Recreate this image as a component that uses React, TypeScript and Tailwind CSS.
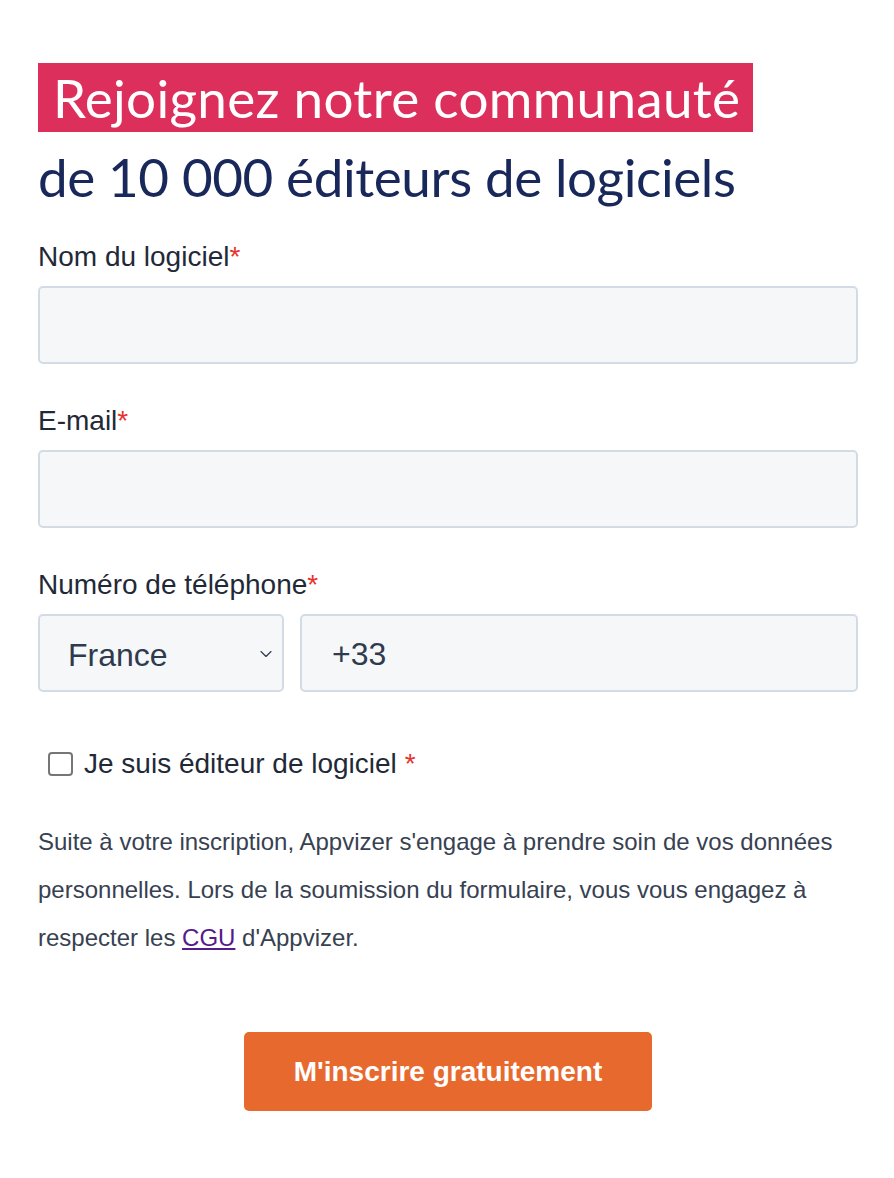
import { ChevronDown } from 'lucide-react'

const labelCls = "block text-[28px] leading-[32px] text-[#1f2937] mb-[13px]"
const inputCls = "w-full h-[78px] bg-[#f5f7f9] border-2 border-[#d3dbe5] rounded-[5px] px-[30px] pt-[3px] text-[32px] text-[#2f3b4d] outline-none"

function Star() {
  return <span className="text-[#e8322d]">*</span>
}

export default function App() {
  return (
    <div className="min-h-[1178px] bg-white pl-[38px] pr-[36px] pt-[63px] font-['Liberation_Sans',Arial,sans-serif]">
      {/* Heading */}
      <h1 className="font-['Lato','Source_Sans_Pro',sans-serif] text-[#18285a] text-[53px] leading-[69px]">
        <span className="inline-block bg-[#dc2f5c] text-white pl-[15px] pr-[13px] tracking-[0.3px]">Rejoignez notre communauté</span>
        <br />
        <span className="inline-block mt-[10px] tracking-[-0.4px]">de 10 000 éditeurs de logiciels</span>
      </h1>

      {/* Nom du logiciel */}
      <div className="mt-[30px]">
        <label className={labelCls}>Nom du logiciel<Star /></label>
        <input className={inputCls} />
      </div>

      {/* E-mail */}
      <div className="mt-[41px]">
        <label className={labelCls}>E-mail<Star /></label>
        <input className={inputCls} />
      </div>

      {/* Téléphone */}
      <div className="mt-[41px]">
        <label className={labelCls}>Numéro de téléphone<Star /></label>
        <div className="flex gap-[16px]">
          <div className="relative w-[246px] shrink-0">
            <div className="h-[78px] bg-[#f5f7f9] border-2 border-[#d3dbe5] rounded-[5px] pl-[28px] pt-[3px] flex items-center text-[32px] text-[#2f3b4d]">
              France
            </div>
            <ChevronDown className="absolute right-[8px] top-[30px] text-[#2f3b4d]" size={20} strokeWidth={1.4} />
          </div>
          <input className={inputCls} defaultValue="+33" />
        </div>
      </div>

      {/* Checkbox */}
      <label className="flex items-center mt-[56px] ml-[10px] text-[28px] leading-[32px] text-[#1f2937]">
        <span className="w-[25px] h-[24px] border-2 border-[#767676] rounded-[4px] mr-[11px] bg-white" />
        Je suis éditeur de logiciel&nbsp;<Star />
      </label>

      {/* Text */}
      <p className="mt-[38px] text-[24px] leading-[48px] text-[#374151]">
        Suite à votre inscription, Appvizer s'engage à prendre soin de vos données personnelles. Lors de la soumission du formulaire, vous vous engagez à respecter les <a href="#" className="text-[#551a8b] underline">CGU</a> d'Appvizer.
      </p>

      {/* Button */}
      <div className="flex justify-center mt-[70px]">
        <button className="w-[408px] h-[79px] bg-[#e8692d] rounded-[5px] text-white font-bold text-[28px]">
          M'inscrire gratuitement
        </button>
      </div>
    </div>
  )
}
